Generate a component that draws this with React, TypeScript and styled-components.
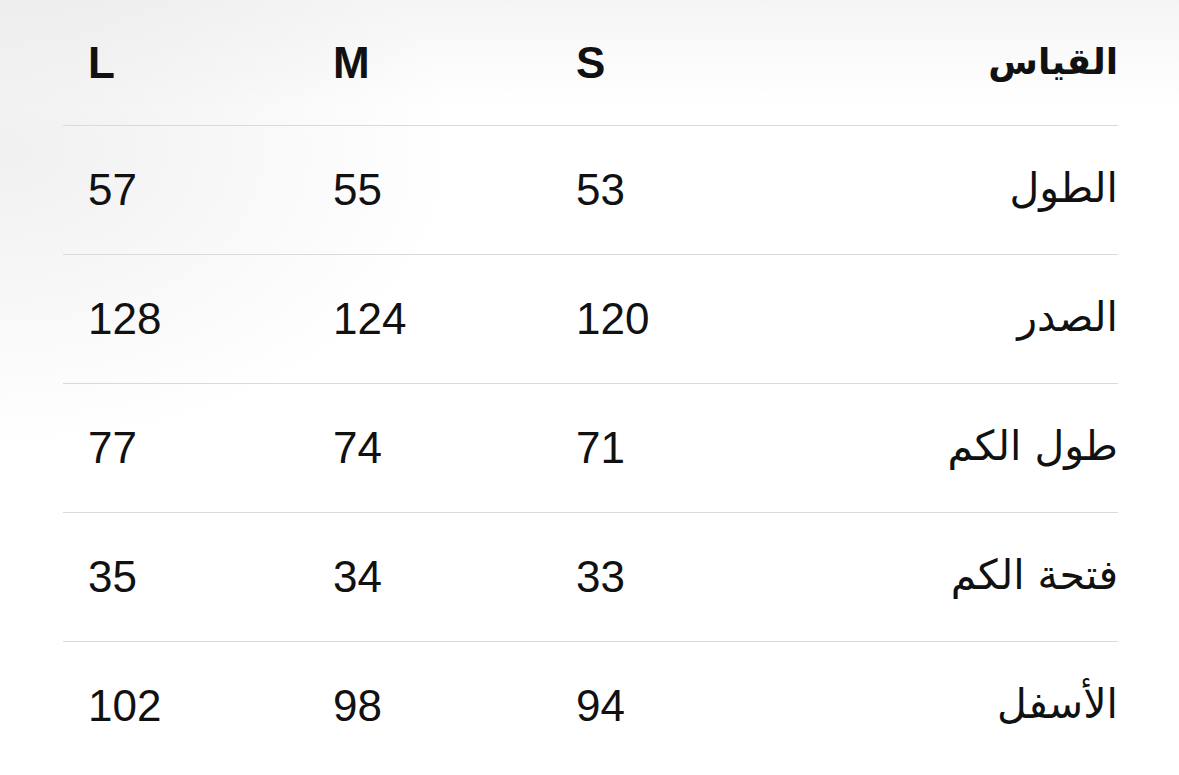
import React from "react";
import styled, { createGlobalStyle } from "styled-components";

const Global = createGlobalStyle`
  html, body { margin: 0; padding: 0; background: #ffffff; }
  body {
    font-family: "Liberation Sans", "DejaVu Sans", "Noto Sans", sans-serif;
    color: #111111;
  }
`;

const Page = styled.div`
  width: 1179px;
  height: 775px;
  box-sizing: border-box;
  padding: 0 61px 0 63px;
  background:
    radial-gradient(ellipse 460px 300px at 0px 150px, rgba(0,0,0,0.06), rgba(0,0,0,0) 100%),
    linear-gradient(180deg, rgba(0,0,0,0.04) 0px, rgba(0,0,0,0) 110px),
    #ffffff;
  overflow: hidden;
`;

const Table = styled.div`
  display: grid;
  grid-template-columns: 245px 243px 1fr auto;
`;

const Cell = styled.div<{ $head?: boolean; $label?: boolean; $last?: boolean }>`
  height: ${(p) => (p.$head ? 125 : 128)}px;
  display: flex;
  align-items: center;
  justify-content: flex-start;
  padding-left: ${(p) => (p.$label ? 0 : 25)}px;
  border-bottom: ${(p) => (p.$last ? "none" : "1px solid #dadada")};
  font-size: 44px;
  font-weight: ${(p) => (p.$head ? 700 : 400)};
  line-height: 1;
  direction: ${(p) => (p.$label ? "rtl" : "ltr")};
`;

const Arabic = styled.span<{ $head?: boolean }>`
  font-family: "DejaVu Sans", sans-serif;
  font-size: ${(p) => (p.$head ? 36 : 41)}px;
  padding-bottom: ${(p) => (p.$head ? 2 : 4)}px;
`;

const rows: [string, string, string, string][] = [
  ["الطول", "53", "55", "57"],
  ["الصدر", "120", "124", "128"],
  ["طول الكم", "71", "74", "77"],
  ["فتحة الكم", "33", "34", "35"],
  ["الأسفل", "94", "98", "102"],
];

export default function App() {
  return (
    <>
      <Global />
      <Page>
        <Table>
          <Cell $head>L</Cell>
          <Cell $head>M</Cell>
          <Cell $head>S</Cell>
          <Cell $head $label>
            <Arabic $head>القياس</Arabic>
          </Cell>
          {rows.map((r, i) => {
            const last = i === rows.length - 1;
            return (
              <React.Fragment key={r[0]}>
                <Cell $last={last}>{r[3]}</Cell>
                <Cell $last={last}>{r[2]}</Cell>
                <Cell $last={last}>{r[1]}</Cell>
                <Cell $label $last={last}>
                  <Arabic>{r[0]}</Arabic>
                </Cell>
              </React.Fragment>
            );
          })}
        </Table>
      </Page>
    </>
  );
}
